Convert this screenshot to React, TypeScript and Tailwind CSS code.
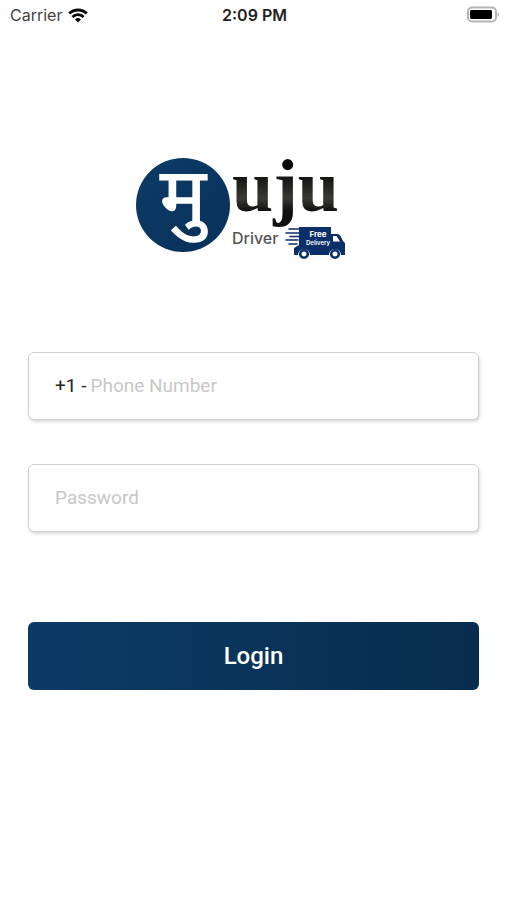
import React, { useState } from "react";

const StatusBar = () => (
  <header className="grid h-[30px] grid-cols-3 items-center pr-2 pl-2.5 font-['Inter',sans-serif] text-base leading-7 text-[#222]">
    <div className="flex items-center gap-1.5 text-[#444]">
      <span>Carrier</span>
      <svg width="20" height="15" viewBox="0 0 20 15" fill="none" stroke="#0a0a0a" strokeWidth="2.8" aria-label="Wi-Fi">
        <path d="M1.2 5.6a12.6 12.6 0 0 1 17.6 0" />
        <path d="M4.4 9a8 8 0 0 1 11.2 0" />
        <path d="M10 14.6l-3-3.1a4.3 4.3 0 0 1 6 0z" fill="#0a0a0a" stroke="none" />
      </svg>
    </div>
    <time className="text-center font-semibold whitespace-nowrap">2:09 PM</time>
    <svg className="justify-self-end" width="33" height="18" viewBox="0 0 33 18" aria-label="Battery">
      <rect x="2" y="1.5" width="28" height="14" rx="4" fill="#fff" stroke="#b4b4b4" strokeWidth="2" />
      <rect x="4" y="4" width="22" height="9" rx="1.4" fill="#000" />
      <path d="M31.6 6.200c1.600.6 1.600 4 0 4.600z" fill="#aaa" />
    </svg>
  </header>
);

const Logo = () => (
  <svg width="212" height="144" viewBox="0 -26 212 144" role="img" aria-label="Muju Driver">
    <defs>
      <linearGradient id="ink" x1="0" y1="0" x2="0" y2="1">
        <stop offset="0.3" stopColor="#080808" />
        <stop offset="0.65" stopColor="#3a3934" />
        <stop offset="0.8" stopColor="#111" />
      </linearGradient>
      <linearGradient id="disc" x1="0" y1="0" x2="1" y2="1">
        <stop offset="0" stopColor="#0c3c66" />
        <stop offset="1" stopColor="#08305a" />
      </linearGradient>
    </defs>
    <circle cx="47" cy="49" r="47" fill="url(#disc)" />
    <text x="47" y="66" textAnchor="middle" fill="#fff" className="font-['Noto_Sans',sans-serif] text-[77px] font-medium">
      मु
    </text>
    <text x="96" y="55" fill="url(#ink)" className="font-['Liberation_Serif',serif] text-[74px] font-bold">
      uju
    </text>
    <text x="96" y="88" fill="#555" className="font-['Inter',sans-serif] text-base font-medium">
      Driver
    </text>
    <g fill="none" stroke="#0b2f69" strokeWidth="1.6" strokeLinecap="round">
      <path d="M153 73h14M150 77h14M154 80.500h11M150 84h12M153 88h8" />
    </g>
    <path
      d="M163 71h32v7h6q3 0 4 3l2 4 2 2v12h-4a6 6 0 0 0-12 0h-19a6 6 0 0 0-12 0h-4v-7l5-3z"
      fill="#0b2f69"
    />
    <path d="M197 80h3.500l3.500 5.500h-7z" fill="#fff" />
    <circle cx="168" cy="98" r="3.800" fill="#fff" stroke="#0b2f69" strokeWidth="2.600" />
    <circle cx="199" cy="98" r="3.800" fill="#fff" stroke="#0b2f69" strokeWidth="2.600" />
    <text x="182" y="81" textAnchor="middle" fill="#fff" className="font-['Inter',sans-serif] text-[8px] font-bold">
      Free
    </text>
    <text x="182" y="89" textAnchor="middle" fill="#fff" className="font-['Inter',sans-serif] text-[6px] font-semibold">
      Delivery
    </text>
  </svg>
);

const fieldBox =
  "flex h-[68px] items-center gap-1 rounded-md border border-[#d0d0d0] bg-white px-[26px] shadow-[1px_2px_3px_rgba(0,0,0,0.15)]";
const fieldInput = "min-w-0 flex-1 bg-transparent outline-none placeholder:text-[#c8c8c8]";

const App = () => {
  const [phone, setPhone] = useState("");
  const [password, setPassword] = useState("");

  return (
    <div className="min-h-screen bg-white font-['Roboto',sans-serif] text-[#222]">
      <StatusBar />
      <main className="px-7 pt-[100px]">
        <div className="flex justify-center pr-6">
          <Logo />
        </div>
        <form className="mt-[78px] flex flex-col text-[19px]" onSubmit={(e) => e.preventDefault()}>
          <div className={fieldBox}>
            <label htmlFor="phone">+1 -</label>
            <input
              id="phone"
              type="tel"
              placeholder="Phone Number"
              value={phone}
              onChange={(e) => setPhone(e.target.value)}
              className={fieldInput}
            />
          </div>
          <div className={`${fieldBox} mt-11`}>
            <input
              type="password"
              aria-label="Password"
              placeholder="Password"
              value={password}
              onChange={(e) => setPassword(e.target.value)}
              className={fieldInput}
            />
          </div>
          <button
            type="submit"
            className="mt-[90px] h-[68px] cursor-pointer rounded-md bg-linear-to-r from-[#0b3c66] to-[#082c4e] text-2xl font-medium text-white"
          >
            Login
          </button>
        </form>
      </main>
    </div>
  );
};

export default App;
